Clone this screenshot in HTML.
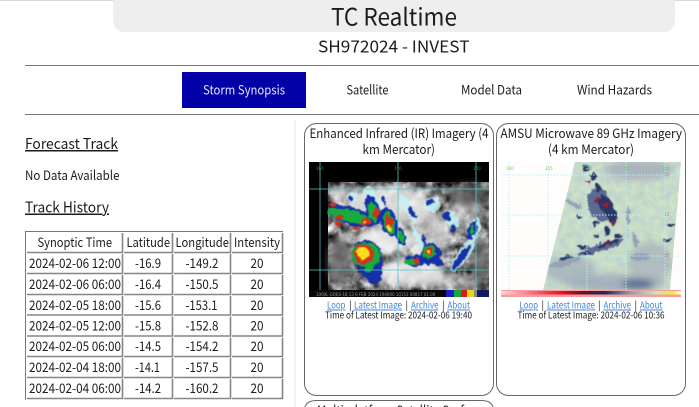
<!DOCTYPE html>
<html><head><meta charset="utf-8"><title>TC Realtime</title>
<style>
html,body{margin:0;padding:0;background:#fff;width:699px;height:407px;overflow:hidden}
svg{position:absolute;left:0;top:0;display:block;overflow:hidden}
text{font-family:"Noto Sans CJK JP","DejaVu Sans",sans-serif;fill:#1c1c1c}
.t{font-size:13px}
.s{font-size:9.500px}
.l{font-size:9.500px;fill:#3b82d6;text-decoration:underline}
.m{font-family:"DejaVu Sans",sans-serif}
</style></head><body>
<svg width="699" height="407" viewBox="0 0 699 407" xmlns="http://www.w3.org/2000/svg">
<defs>
<filter id="gray" filterUnits="userSpaceOnUse" x="328" y="182" width="161" height="108" color-interpolation-filters="sRGB">
<feTurbulence type="fractalNoise" baseFrequency=".09" numOctaves="3" seed="4"/>
<feColorMatrix values="1 0 0 0 0 1 0 0 0 0 1 0 0 0 0 0 0 0 0 1"/>
<feComponentTransfer><feFuncR type="linear" slope="1.500" intercept="-0.280"/><feFuncG type="linear" slope="1.500" intercept="-0.280"/><feFuncB type="linear" slope="1.500" intercept="-0.280"/></feComponentTransfer>
</filter>
<filter id="mott" filterUnits="userSpaceOnUse" x="540" y="160" width="145" height="135" color-interpolation-filters="sRGB">
<feTurbulence type="fractalNoise" baseFrequency=".13" numOctaves="3" seed="9"/>
<feColorMatrix values="1 0 0 0 0 1 0 0 0 0 1 0 0 0 0 0 0 0 0 1"/>
<feComponentTransfer><feFuncR type="table" tableValues=".70 .76 .80 .86"/><feFuncG type="table" tableValues=".78 .84 .88 .93"/><feFuncB type="table" tableValues=".82 .80 .78 .82"/></feComponentTransfer>
</filter>
<filter id="d" filterUnits="userSpaceOnUse" x="300" y="155" width="395" height="150" color-interpolation-filters="sRGB">
<feTurbulence type="fractalNoise" baseFrequency=".2" numOctaves="2" seed="7" result="n"/>
<feDisplacementMap in="SourceGraphic" in2="n" scale="6" xChannelSelector="R" yChannelSelector="G"/>
<feGaussianBlur stdDeviation=".6"/>
</filter>
<filter id="s" filterUnits="userSpaceOnUse" x="300" y="155" width="395" height="150">
<feGaussianBlur stdDeviation="3.500"/>
</filter>
<clipPath id="ir"><rect x="309" y="162" width="180" height="135"/></clipPath>
<clipPath id="mw"><polygon points="575,162 681,162 670,290 543,290"/></clipPath>
<linearGradient id="cb" x1="0" x2="1" y1="0" y2="0">
<stop offset="0" stop-color="#ffd8d8"/><stop offset=".33" stop-color="#f01020"/><stop offset=".45" stop-color="#701020"/><stop offset=".58" stop-color="#1a2a5a"/><stop offset=".72" stop-color="#8aa0b0"/><stop offset=".86" stop-color="#c8e8b0"/><stop offset=".96" stop-color="#f8f020"/><stop offset="1" stop-color="#fffff0"/>
</linearGradient>
</defs>
<rect x="0" y="0" width="699" height="1" fill="#d8d8d8"/>
<rect x="113" y="-10" width="562" height="42" rx="11" fill="#eeeeee"/>
<text x="331" y="25.500" font-size="24" textLength="126" lengthAdjust="spacingAndGlyphs">TC Realtime</text>
<text x="318" y="52.500" font-size="16.500" textLength="151.500" lengthAdjust="spacingAndGlyphs">SH972024 - INVEST</text>
<rect x="25" y="65" width="674" height="1" fill="#777"/>
<rect x="25" y="114" width="674" height="1" fill="#777"/>
<rect x="182" y="72" width="124" height="36" fill="#0000a6"/>
<text class="t" x="203" y="94.500" style="fill:#e6e6ff" textLength="82" lengthAdjust="spacingAndGlyphs">Storm Synopsis</text>
<text class="t" x="346.500" y="94.500" textLength="42" lengthAdjust="spacingAndGlyphs">Satellite</text>
<text class="t" x="461" y="94.500" textLength="61" lengthAdjust="spacingAndGlyphs">Model Data</text>
<text class="t" x="577" y="94.500" textLength="75" lengthAdjust="spacingAndGlyphs">Wind Hazards</text>
<rect x="294" y="120" width="2" height="287" fill="#f2f2f2"/>
<text x="25" y="149" font-size="15" text-decoration="underline" textLength="93" lengthAdjust="spacingAndGlyphs">Forecast Track</text>
<text class="t" x="25" y="180" textLength="94.500" lengthAdjust="spacingAndGlyphs">No Data Available</text>
<text x="25" y="212.500" font-size="15" text-decoration="underline" textLength="84" lengthAdjust="spacingAndGlyphs">Track History</text>

<!-- table -->
<path d="M25.500 400V231.500H283" fill="none" stroke="#777"/>
<g fill="none" stroke="#858585" stroke-width="1.600">
<path d="M27 252.500H122.500V233M124 252.500H172.500V233M174 252.500H230.500V233M232 252.500H282.500V233"/>
<path d="M27 273.500H122.500V254M124 273.500H172.500V254M174 273.500H230.500V254M232 273.500H282.500V254"/>
<path d="M27 294.500H122.500V275M124 294.500H172.500V275M174 294.500H230.500V275M232 294.500H282.500V275"/>
<path d="M27 315H122.500V296M124 315H172.500V296M174 315H230.500V296M232 315H282.500V296"/>
<path d="M27 336H122.500V316.500M124 336H172.500V316.500M174 336H230.500V316.500M232 336H282.500V316.500"/>
<path d="M27 356.500H122.500V337.500M124 356.500H172.500V337.500M174 356.500H230.500V337.500M232 356.500H282.500V337.500"/>
<path d="M27 377.500H122.500V358M124 377.500H172.500V358M174 377.500H230.500V358M232 377.500H282.500V358"/>
<path d="M27 398.500H122.500V379M124 398.500H172.500V379M174 398.500H230.500V379M232 398.500H282.500V379"/>
</g>
<text class="t" x="37.500" y="247" textLength="74.500" lengthAdjust="spacingAndGlyphs">Synoptic Time</text>
<text class="t" x="126.500" y="247" textLength="43.500" lengthAdjust="spacingAndGlyphs">Latitude</text>
<text class="t" x="175.500" y="247" textLength="53.500" lengthAdjust="spacingAndGlyphs">Longitude</text>
<text class="t" x="234" y="247" textLength="46" lengthAdjust="spacingAndGlyphs">Intensity</text>
<text class="t" x="29" y="268" textLength="92" lengthAdjust="spacingAndGlyphs">2024-02-06 12:00</text>
<text class="t" x="29" y="289" textLength="92" lengthAdjust="spacingAndGlyphs">2024-02-06 06:00</text>
<text class="t" x="29" y="310" textLength="92" lengthAdjust="spacingAndGlyphs">2024-02-05 18:00</text>
<text class="t" x="29" y="330.500" textLength="92" lengthAdjust="spacingAndGlyphs">2024-02-05 12:00</text>
<text class="t" x="29" y="351" textLength="92" lengthAdjust="spacingAndGlyphs">2024-02-05 06:00</text>
<text class="t" x="29" y="372" textLength="92" lengthAdjust="spacingAndGlyphs">2024-02-04 18:00</text>
<text class="t" x="29" y="393" textLength="92" lengthAdjust="spacingAndGlyphs">2024-02-04 06:00</text>
<text class="t" x="135" y="268" textLength="26" lengthAdjust="spacingAndGlyphs">-16.9</text>
<text class="t" x="135" y="289" textLength="26" lengthAdjust="spacingAndGlyphs">-16.4</text>
<text class="t" x="135" y="310" textLength="26" lengthAdjust="spacingAndGlyphs">-15.6</text>
<text class="t" x="135" y="330.500" textLength="26" lengthAdjust="spacingAndGlyphs">-15.8</text>
<text class="t" x="135" y="351" textLength="26" lengthAdjust="spacingAndGlyphs">-14.5</text>
<text class="t" x="135" y="372" textLength="25" lengthAdjust="spacingAndGlyphs">-14.1</text>
<text class="t" x="135" y="393" textLength="26" lengthAdjust="spacingAndGlyphs">-14.2</text>
<text class="t" x="185.500" y="268" textLength="33" lengthAdjust="spacingAndGlyphs">-149.2</text>
<text class="t" x="185.500" y="289" textLength="33" lengthAdjust="spacingAndGlyphs">-150.5</text>
<text class="t" x="185.500" y="310" textLength="32" lengthAdjust="spacingAndGlyphs">-153.1</text>
<text class="t" x="185.500" y="330.500" textLength="33" lengthAdjust="spacingAndGlyphs">-152.8</text>
<text class="t" x="185.500" y="351" textLength="33" lengthAdjust="spacingAndGlyphs">-154.2</text>
<text class="t" x="185.500" y="372" textLength="33" lengthAdjust="spacingAndGlyphs">-157.5</text>
<text class="t" x="185.500" y="393" textLength="33" lengthAdjust="spacingAndGlyphs">-160.2</text>
<text class="t" x="250.500" y="268" textLength="13" lengthAdjust="spacingAndGlyphs">20</text>
<text class="t" x="250.500" y="289" textLength="13" lengthAdjust="spacingAndGlyphs">20</text>
<text class="t" x="250.500" y="310" textLength="13" lengthAdjust="spacingAndGlyphs">20</text>
<text class="t" x="250.500" y="330.500" textLength="13" lengthAdjust="spacingAndGlyphs">20</text>
<text class="t" x="250.500" y="351" textLength="13" lengthAdjust="spacingAndGlyphs">20</text>
<text class="t" x="250.500" y="372" textLength="13" lengthAdjust="spacingAndGlyphs">20</text>
<text class="t" x="250.500" y="393" textLength="13" lengthAdjust="spacingAndGlyphs">20</text>

<!-- panels -->
<rect x="304.500" y="123.500" width="189" height="272" rx="12" fill="#fff" stroke="#666"/>
<rect x="496.500" y="123.500" width="189" height="272" rx="12" fill="#fff" stroke="#666"/>
<path d="M304.500 407V411Q304.500 400.500 316.500 400.500H481.500Q493.500 400.500 493.500 411V407" fill="#fff" stroke="#666"/>
<text class="t" x="317" y="415" textLength="165" lengthAdjust="spacingAndGlyphs">Multi-platform Satellite Surface</text>

<text class="t" x="309.500" y="138" textLength="179" lengthAdjust="spacingAndGlyphs">Enhanced Infrared (IR) Imagery (4</text>
<text class="t" x="362.500" y="154" textLength="72.500" lengthAdjust="spacingAndGlyphs">km Mercator)</text>
<text class="t" x="500.500" y="138" textLength="181.500" lengthAdjust="spacingAndGlyphs">AMSU Microwave 89 GHz Imagery</text>
<text class="t" x="548" y="154" textLength="86" lengthAdjust="spacingAndGlyphs">(4 km Mercator)</text>

<!-- IR image -->
<g clip-path="url(#ir)">
<rect x="309" y="162" width="180" height="135" fill="#000"/>
<rect x="328" y="182" width="161" height="108" filter="url(#gray)"/>
<g filter="url(#s)">
<ellipse cx="345" cy="195" rx="15" ry="8" fill="#d8d8d8" opacity=".7"/>
<ellipse cx="390" cy="205" rx="40" ry="20" fill="#eeeeee" opacity=".85"/>
<ellipse cx="385" cy="240" rx="28" ry="14" fill="#f4f4f4" opacity=".9"/>
<ellipse cx="430" cy="235" rx="20" ry="25" fill="#dcdcdc" opacity=".75"/>
<ellipse cx="410" cy="272" rx="35" ry="14" fill="#f0f0f0" opacity=".9"/>
<ellipse cx="445" cy="282" rx="30" ry="6" fill="#d0d0d0" opacity=".7"/>
<ellipse cx="465" cy="215" rx="20" ry="15" fill="#d0d0d0" opacity=".6"/>
<ellipse cx="340" cy="262" rx="12" ry="26" fill="#6e6e6e" opacity=".85"/>
<ellipse cx="468" cy="195" rx="22" ry="12" fill="#555" opacity=".8"/>
<ellipse cx="480" cy="262" rx="10" ry="25" fill="#666" opacity=".8"/>
</g>
<g filter="url(#d)">
<!-- cyan halos -->
<g fill="#c4f2f2" opacity=".85">
<ellipse cx="374" cy="204" rx="7" ry="20" transform="rotate(-25 374 204)"/>
<ellipse cx="408" cy="208" rx="4" ry="16" transform="rotate(-30 408 208)"/>
<ellipse cx="432" cy="205" rx="8" ry="7"/>
<ellipse cx="452" cy="220" rx="6" ry="10" transform="rotate(-30 452 220)"/>
<ellipse cx="418" cy="238" rx="3" ry="14" transform="rotate(-20 418 238)"/>
<ellipse cx="463" cy="255" rx="6" ry="20" transform="rotate(35 463 255)"/>
<ellipse cx="474" cy="230" rx="6" ry="12" transform="rotate(20 474 230)"/>
<ellipse cx="352" cy="197" rx="5" ry="5"/>
</g>
<!-- blue -->
<g fill="#1530a8">
<ellipse cx="352" cy="216" rx="25" ry="9" transform="rotate(16 352 216)"/>
<ellipse cx="373" cy="210" rx="7" ry="15" transform="rotate(-20 373 210)"/>
<ellipse cx="389" cy="222" rx="8" ry="15" transform="rotate(-18 389 222)"/>
<ellipse cx="400" cy="236" rx="4.500" ry="11" transform="rotate(-25 400 236)"/>
<ellipse cx="412" cy="212" rx="2" ry="7" transform="rotate(-30 412 212)"/>
<ellipse cx="351" cy="198" rx="2.500" ry="3"/>
<ellipse cx="384" cy="201" rx="1.500" ry="6" transform="rotate(-25 384 201)"/>
<ellipse cx="430" cy="202" rx="4" ry="2.500"/>
<ellipse cx="447" cy="217" rx="3.500" ry="6" transform="rotate(-35 447 217)"/>
<ellipse cx="453" cy="228" rx="3" ry="3"/>
<ellipse cx="472" cy="230" rx="4" ry="10" transform="rotate(20 472 230)"/>
<ellipse cx="461" cy="258" rx="3.500" ry="15" transform="rotate(35 461 258)"/>
<ellipse cx="424" cy="240" rx="1.500" ry="7" transform="rotate(-20 424 240)"/>
<path d="M353 252Q354 240 366 240Q380 241 381 254Q384 264 381 276Q381 285 375 284Q363 280 359 270Q352 262 353 252Z"/>
<ellipse cx="431" cy="254" rx="10" ry="11"/>
<ellipse cx="415" cy="261" rx="10" ry="6"/>
<ellipse cx="440" cy="263" rx="4" ry="3"/>
</g>
<!-- green -->
<g fill="#18ac3c">
<ellipse cx="349" cy="216" rx="22" ry="6" transform="rotate(14 349 216)"/>
<ellipse cx="373" cy="212" rx="5" ry="10" transform="rotate(-15 373 212)"/>
<ellipse cx="389" cy="223" rx="5.500" ry="11" transform="rotate(-15 389 223)"/>
<ellipse cx="401" cy="237" rx="2.500" ry="6" transform="rotate(-25 401 237)"/>
<ellipse cx="472" cy="230" rx="2" ry="5"/>
<ellipse cx="366" cy="255" rx="14.500" ry="12.500"/>
<ellipse cx="369" cy="268" rx="5" ry="4"/>
<ellipse cx="429" cy="252" rx="6.500" ry="6.500"/>
<ellipse cx="412" cy="262" rx="8" ry="3"/>
</g>
<!-- red -->
<g fill="#d6301c">
<ellipse cx="332" cy="205" rx="4" ry="2"/>
<ellipse cx="339" cy="217" rx="4" ry="2"/>
<ellipse cx="338" cy="224" rx="3" ry="1.500"/>
<ellipse cx="365" cy="222" rx="5" ry="4"/>
<ellipse cx="356" cy="228" rx="4" ry="2"/>
<ellipse cx="376" cy="213" rx="3" ry="4.500"/>
<ellipse cx="389" cy="222" rx="3.500" ry="6.500"/>
<ellipse cx="364" cy="254" rx="10" ry="10"/>
<ellipse cx="429" cy="252" rx="4.500" ry="4"/>
<ellipse cx="416" cy="261" rx="3" ry="3.500"/>
</g>
<g fill="#f7e019">
<ellipse cx="365" cy="222" rx="1.800" ry="1.500"/>
<ellipse cx="389" cy="228" rx="2.200" ry="2.500"/>
<ellipse cx="363" cy="253" rx="6.500" ry="6.500"/>
<ellipse cx="429" cy="252" rx="2" ry="2"/>
</g>
</g>
<g stroke="#57c4c8" stroke-width=".8" fill="none">
<path d="M309 189H489M309 270H489M320 162V297M398 162V297M476 162V290"/>
</g>
<text class="m" x="316" y="170" style="font-size:4px;fill:#2d9e2d">160</text>
<text class="m" x="394" y="170" style="font-size:4px;fill:#2d9e2d">150</text>
<text class="m" x="473" y="170" style="font-size:4px;fill:#2d9e2d">140</text>
<rect x="309" y="290" width="180" height="7" fill="#0a0a0a"/>
<text class="m" x="316" y="296" style="font-size:4px;fill:#999">1000L GOES-18 13 6 FEB 2024 194000 10153 00817 01.00</text>
<rect x="446" y="290" width="8" height="7" fill="#1a20c8"/>
<rect x="454" y="290" width="7" height="7" fill="#18a83a"/>
<rect x="461" y="290" width="6" height="7" fill="#d4201c"/>
<rect x="467" y="290" width="7" height="7" fill="#e8d81c"/>
<rect x="474" y="290" width="3" height="7" fill="#888"/>
<rect x="477" y="290" width="12" height="7" fill="#111a5a"/>
</g>

<!-- MW image -->
<rect x="501" y="162" width="180" height="135" fill="#fffdfb"/>
<g stroke="#b4f4f8" stroke-width="1" stroke-dasharray="1.500 1.500" fill="none">
<path d="M503 175H681M503 215H681M503 256H681M509 162V290M548 162V290"/>
</g>
<g clip-path="url(#mw)">
<rect x="540" y="160" width="145" height="135" filter="url(#mott)"/>
<g filter="url(#s)">
<ellipse cx="638" cy="170" rx="34" ry="10" fill="#a9b0bb" opacity=".9"/>
<ellipse cx="615" cy="283" rx="50" ry="9" fill="#9ba8ba" opacity=".8"/>
<ellipse cx="570" cy="270" rx="25" ry="14" fill="#a4b1bb" opacity=".8"/>
<ellipse cx="650" cy="262" rx="22" ry="20" fill="#aab4bb" opacity=".8"/>
<ellipse cx="638" cy="284" rx="16" ry="5" fill="#586d8e"/>
</g>
<g filter="url(#d)">
<g fill="#97a2b6">
<ellipse cx="574" cy="204" rx="10" ry="2.500" transform="rotate(25 574 204)"/>
<ellipse cx="640" cy="257" rx="10" ry="4"/>
<ellipse cx="628" cy="215" rx="2" ry="9"/>
<ellipse cx="565" cy="262" rx="16" ry="4" transform="rotate(-12 565 262)"/>
<ellipse cx="635" cy="240" rx="2.500" ry="7" transform="rotate(-15 635 240)"/>
</g>
<g fill="#5a6a90">
<ellipse cx="600" cy="205" rx="12" ry="17" transform="rotate(-22 600 205)"/>
<ellipse cx="600" cy="248" rx="24" ry="4" transform="rotate(-18 600 248)"/>
</g>
<g fill="#2a3665">
<ellipse cx="586" cy="168" rx="3.500" ry="3.500"/>
<ellipse cx="593" cy="176" rx="3" ry="4.500" transform="rotate(-30 593 176)"/>
<ellipse cx="598" cy="187" rx="2" ry="5" transform="rotate(-30 598 187)"/>
<ellipse cx="606" cy="205" rx="6.500" ry="10" transform="rotate(-25 606 205)"/>
<ellipse cx="612" cy="216" rx="5" ry="9" transform="rotate(-15 612 216)"/>
<ellipse cx="596" cy="224" rx="3" ry="3"/>
<ellipse cx="607" cy="231" rx="3" ry="5"/>
<ellipse cx="596" cy="236" rx="2" ry="2"/>
<ellipse cx="609" cy="243" rx="11" ry="2.200" transform="rotate(-20 609 243)"/>
<ellipse cx="618" cy="236" rx="4" ry="2"/>
<ellipse cx="583" cy="247" rx="6" ry="1.800"/>
<ellipse cx="566" cy="258" rx="7" ry="1.800" transform="rotate(-20 566 258)"/>
<ellipse cx="587" cy="253" rx="6" ry="1.500"/>
<ellipse cx="672" cy="225" rx="4" ry="1.500"/>
<ellipse cx="667" cy="240" rx="4" ry="1.500"/>
<ellipse cx="579" cy="217" rx="2.500" ry="1.200"/>
</g>
<g fill="#d2e0cf">
<ellipse cx="598" cy="228" rx="2.500" ry="4"/>
<ellipse cx="591" cy="172" rx="1.500" ry="2.500"/>
</g>
<g fill="#a01c34">
<ellipse cx="589" cy="182" rx="3" ry="1.200"/>
<ellipse cx="597" cy="200" rx="2" ry="3"/>
<ellipse cx="606" cy="205" rx="3" ry="2.200"/>
<ellipse cx="608" cy="244" rx="4" ry="1.200"/>
<ellipse cx="613" cy="223" rx="1.200" ry="1.800"/>
</g>
</g>
<path d="M548 256H681M548 215H681M548 175H681M587 162V290M626 162V290M665 162V290" stroke="#b4f4f8" stroke-width="1" stroke-dasharray="1.500 1.500" fill="none"/>
</g>
<text class="m" x="506" y="170" style="font-size:4px;fill:#5cd05c">160</text>
<text class="m" x="545" y="170" style="font-size:4px;fill:#5cd05c">155</text>
<text class="m" x="584" y="170" style="font-size:4px;fill:#2da02d">150</text>
<text class="m" x="623" y="170" style="font-size:4px;fill:#5cd05c">145</text>
<text class="m" x="662" y="170" style="font-size:4px;fill:#5cd05c">140</text>
<text class="m" x="663" y="176" style="font-size:4px;fill:#e06a5a">-10</text>
<text class="m" x="663" y="216" style="font-size:4px;fill:#e06a5a">-15</text>
<text class="m" x="663" y="257" style="font-size:4px;fill:#e06a5a">-20</text>
<rect x="501" y="290" width="180" height="7" fill="#f79ca0"/>
<rect x="501" y="291" width="180" height="3.500" fill="url(#cb)"/>

<!-- links -->
<text class="l" x="327" y="308.500" textLength="18.500" lengthAdjust="spacingAndGlyphs">Loop</text>
<text class="s" x="349" y="308.500">|</text>
<text class="l" x="354" y="308.500" textLength="48" lengthAdjust="spacingAndGlyphs">Latest Image</text>
<text class="s" x="405.500" y="308.500">|</text>
<text class="l" x="411" y="308.500" textLength="27.500" lengthAdjust="spacingAndGlyphs">Archive</text>
<text class="s" x="442" y="308.500">|</text>
<text class="l" x="447.500" y="308.500" textLength="22.500" lengthAdjust="spacingAndGlyphs">About</text>
<text class="s" x="325" y="318.500" textLength="147" lengthAdjust="spacingAndGlyphs">Time of Latest Image: 2024-02-06 19:40</text>

<text class="l" x="519.500" y="308.500" textLength="18.500" lengthAdjust="spacingAndGlyphs">Loop</text>
<text class="s" x="541.500" y="308.500">|</text>
<text class="l" x="547" y="308.500" textLength="48" lengthAdjust="spacingAndGlyphs">Latest Image</text>
<text class="s" x="598" y="308.500">|</text>
<text class="l" x="603.500" y="308.500" textLength="27.500" lengthAdjust="spacingAndGlyphs">Archive</text>
<text class="s" x="634.500" y="308.500">|</text>
<text class="l" x="640" y="308.500" textLength="22.500" lengthAdjust="spacingAndGlyphs">About</text>
<text class="s" x="517.500" y="318.500" textLength="147" lengthAdjust="spacingAndGlyphs">Time of Latest Image: 2024-02-06 10:36</text>
</svg>
</body></html>
